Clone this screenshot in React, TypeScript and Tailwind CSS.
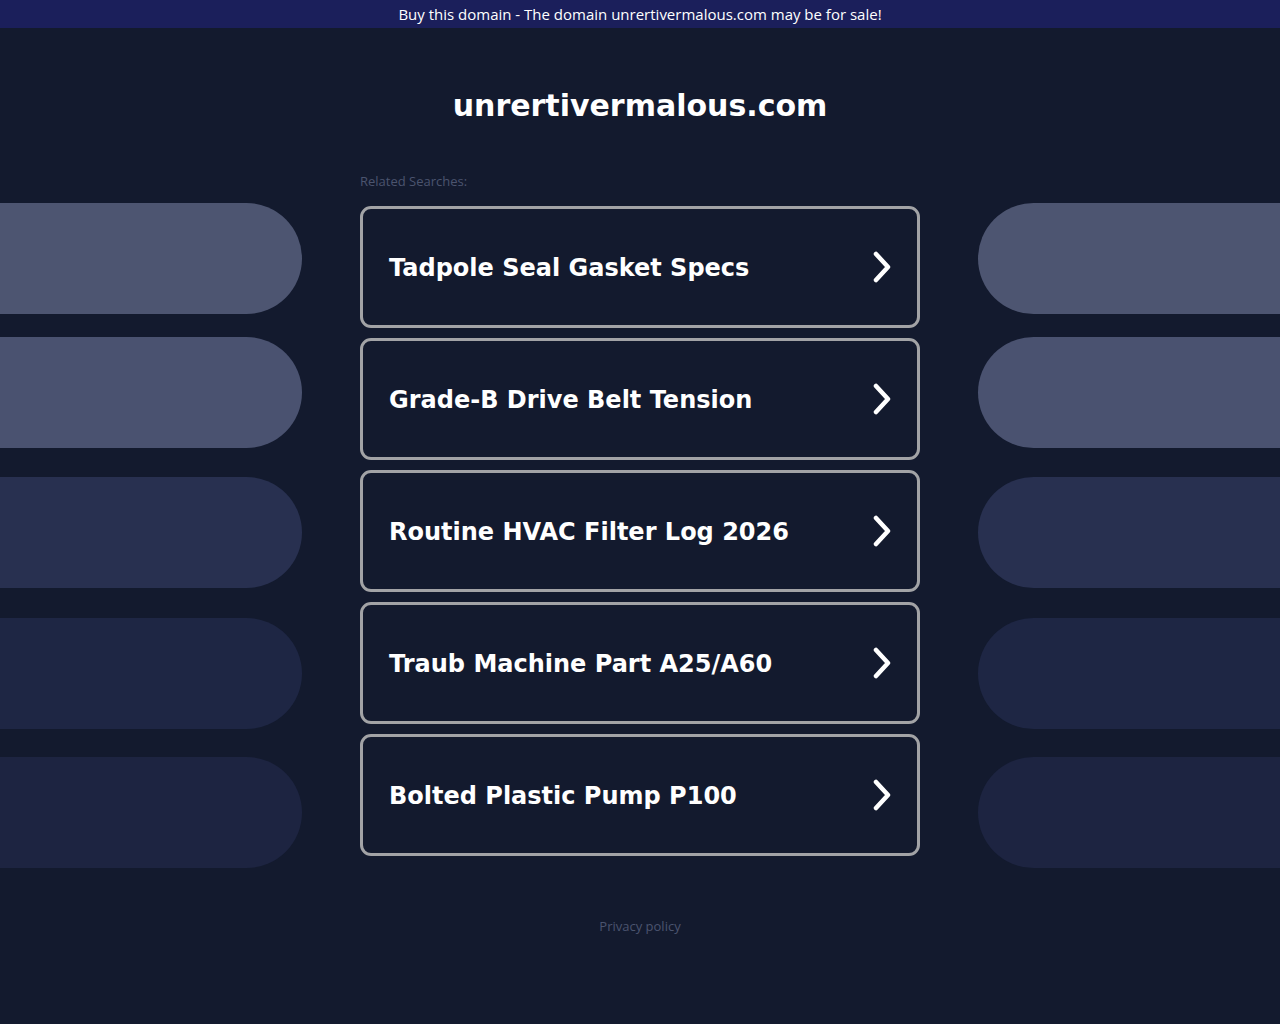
const searches = [
  'Tadpole Seal Gasket Specs',
  'Grade-B Drive Belt Tension',
  'Routine HVAC Filter Log 2026',
  'Traub Machine Part A25/A60',
  'Bolted Plastic Pump P100',
];

// decorative side pills: top margin + colour
const pills = [
  { mt: 'mt-0', bg: 'bg-[#4d5571]' },
  { mt: 'mt-[23px]', bg: 'bg-[#4a5270]' },
  { mt: 'mt-[29px]', bg: 'bg-[#283050]' },
  { mt: 'mt-[30px]', bg: 'bg-[#1e2644]' },
  { mt: 'mt-[28px]', bg: 'bg-[#1d2441]' },
];

function Chevron() {
  return (
    <svg width="22" height="32" viewBox="0 0 22 32" fill="none" className="shrink-0">
      <polyline points="5,3 17,16 5,29" stroke="white" strokeWidth="4.5" strokeLinecap="round" strokeLinejoin="round" />
    </svg>
  );
}

function Side({ right }: { right?: boolean }) {
  return (
    <div className="w-[302px] shrink-0 flex flex-col pt-[175px]">
      {pills.map((p, i) => (
        <div
          key={i}
          className={`h-[111px] ${p.mt} ${p.bg} ${right ? 'rounded-l-[56px]' : 'rounded-r-[56px]'}`}
        />
      ))}
    </div>
  );
}

export default function App() {
  return (
    <div className="min-h-[1024px] bg-[#131a2e] font-['DejaVu_Sans',sans-serif]">
      <div className="h-[28px] bg-[#1b1f5b] flex items-center justify-center text-white text-[15px] font-['Open_Sans',sans-serif] font-medium">
        Buy this domain - The domain unrertivermalous.com may be for sale!
      </div>

      <div className="flex justify-between">
        <Side />
        <div className="w-[560px] shrink-0 flex flex-col">
          <h1 className="text-white font-bold text-[30px] text-center mt-[58px] h-[40px] leading-[40px] w-[700px] -ml-[70px]">
            unrertivermalous.com
          </h1>
          <div className="mt-[48px] text-[13px] text-[#4b546e] font-['Open_Sans',sans-serif] h-[15px] leading-[15px]">
            Related Searches:
          </div>
          <div className="mt-[17px] flex flex-col gap-[10px]">
            {searches.map(s => (
              <div
                key={s}
                className="h-[122px] border-[3px] border-[#a2a3a6] rounded-[11px] flex items-center justify-between pl-[26px] pr-[24px]"
              >
                <span className="text-white font-bold text-[24px] mt-[2px]">{s}</span>
                <Chevron />
              </div>
            ))}
          </div>
          <div className="mt-[61px] text-center text-[13px] text-[#4b546e] font-['Open_Sans',sans-serif]">
            Privacy policy
          </div>
        </div>
        <Side right />
      </div>
    </div>
  );
}
